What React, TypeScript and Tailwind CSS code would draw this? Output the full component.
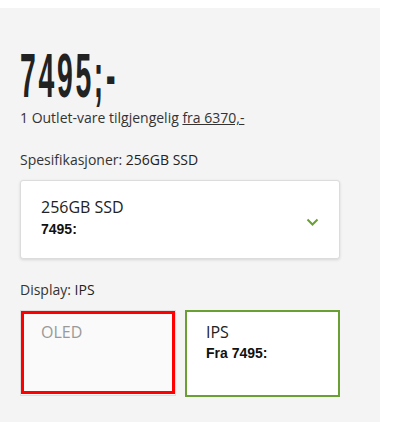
const BODY = { fontFamily: '"Open Sans", "Liberation Sans", sans-serif' };
const PRICE = { fontFamily: '"Liberation Sans", Arial, sans-serif' };

export default function App() {
  return (
    <div className="min-h-[422px] bg-white pt-2" style={BODY}>
      <div className="w-[380px] min-h-[414px] bg-[#f4f4f4] px-5 pt-9 text-[#333]">
        {/* Price */}
        <div className="h-[63px] text-[63px] leading-[63px] font-bold text-[#222] whitespace-nowrap" style={PRICE}>
          <span className="inline-block origin-left scale-x-[0.45] tracking-[6px]">7495;-</span>
        </div>
        <p className="mt-px text-sm leading-5">
          1 Outlet-vare tilgjengelig <a className="underline">fra 6370,-</a>
        </p>

        {/* Spesifikasjoner */}
        <p className="mt-[22px] text-sm leading-5">
          Spesifikasjoner: <span className="font-medium text-[#222]">256GB SSD</span>
        </p>
        <div className="mt-[10px] w-[320px] h-[79px] bg-white border border-[#dcdcdc] rounded-[3px] shadow-[0_1px_3px_rgba(0,0,0,0.12)] flex items-center justify-between pl-5 pr-5">
          <div className="-mt-1">
            <p className="text-base leading-[22px] text-[#222]">256GB SSD</p>
            <p className="mt-px text-sm leading-5 font-bold text-[#111]" style={PRICE}>7495:</p>
          </div>
          <svg width="13" height="8" viewBox="0 0 13 8" fill="none" className="mt-1">
            <polyline points="1.5,1.5 6.5,6.5 11.5,1.5" stroke="#6aa033" strokeWidth="2" />
          </svg>
        </div>

        {/* Display */}
        <p className="mt-[21px] text-sm leading-5">
          Display: <span className="font-medium text-[#222]">IPS</span>
        </p>
        <div className="mt-[10px] w-[320px] grid grid-cols-[156px_155px] gap-[9px]">
          <div className="relative h-[86px] bg-[#fafafa] border border-[#dedede] pl-5 pt-[10px]">
            <div className="absolute left-0 top-0 right-0 bottom-[1px] border-[3px] border-[#ff0000]" />
            <p className="text-base leading-[22px] text-[#999]">OLED</p>
          </div>
          <div className="h-[87px] bg-white border-2 border-[#6aa033] pl-[19px] pt-[9px]">
            <p className="text-base leading-[22px] text-[#222]">IPS</p>
            <p className="text-sm leading-5 font-bold text-[#111]" style={PRICE}>Fra 7495:</p>
          </div>
        </div>
      </div>
    </div>
  );
}
